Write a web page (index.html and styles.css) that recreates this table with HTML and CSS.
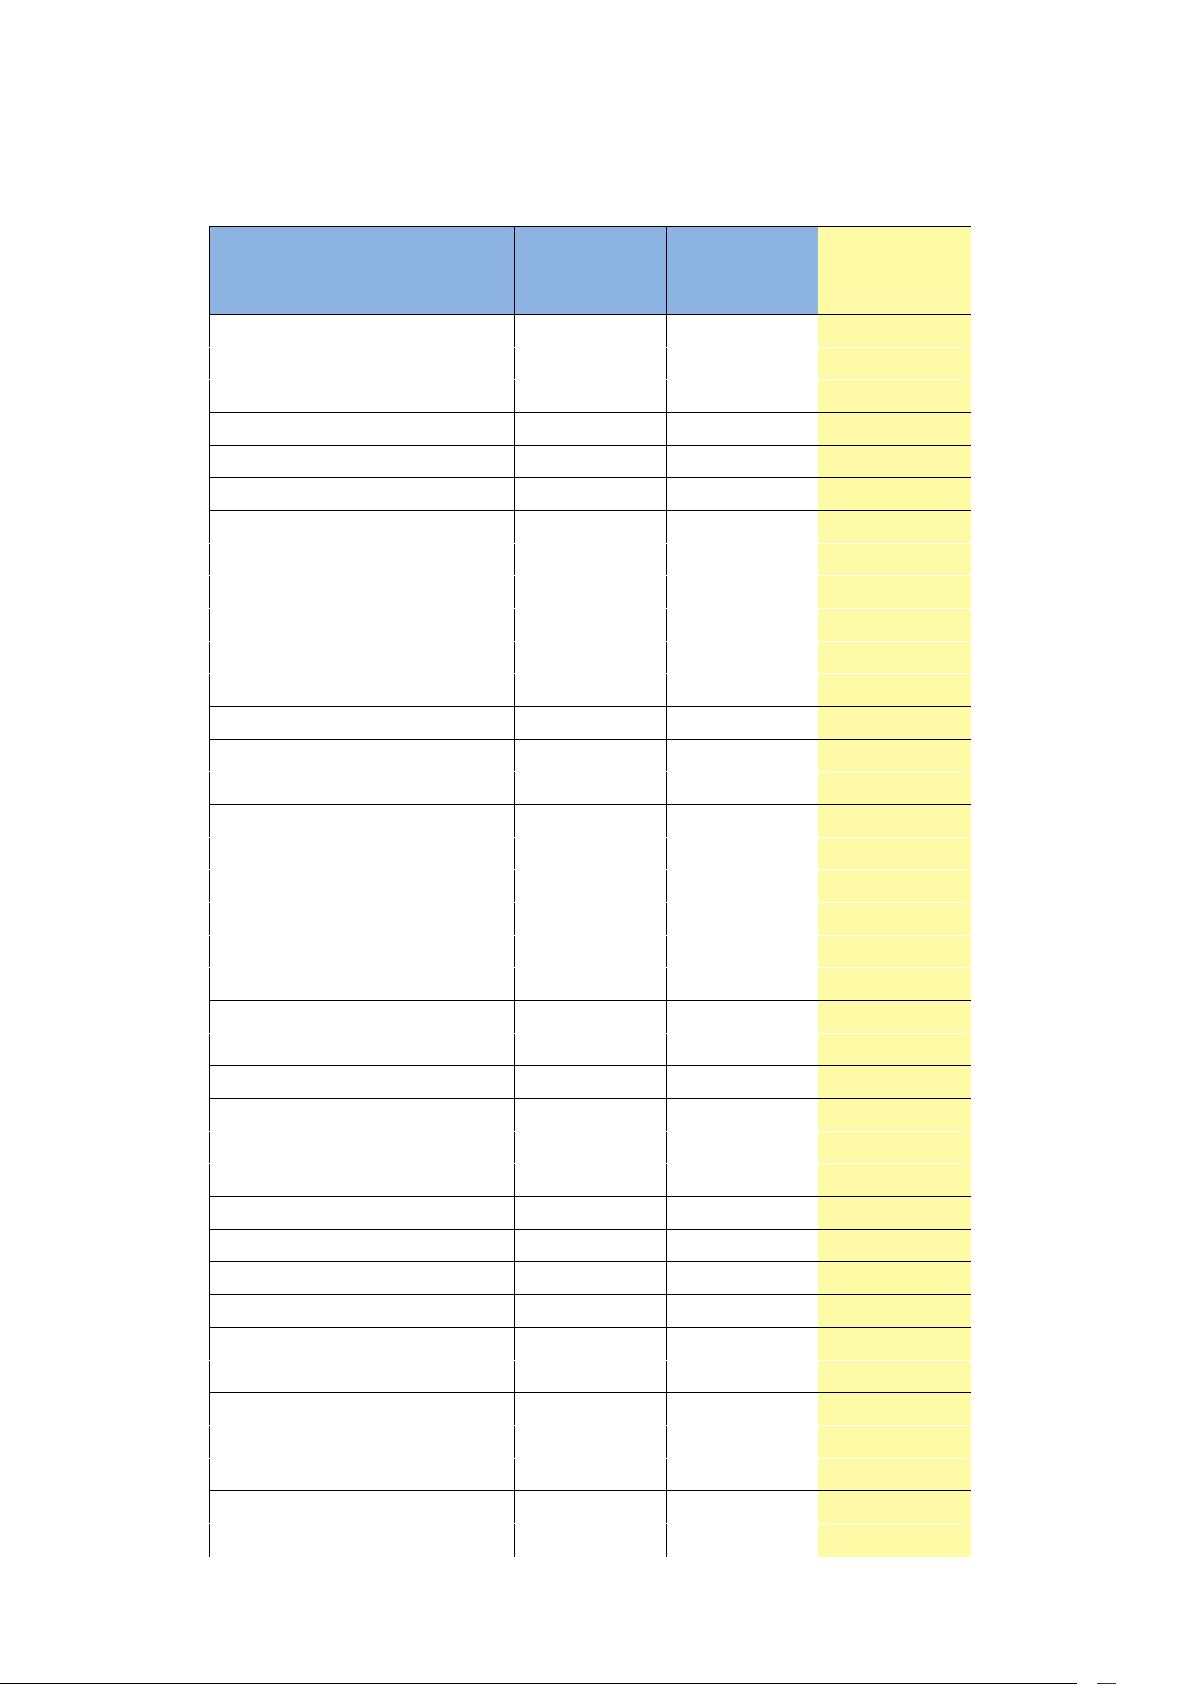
FILE: index.html
```html
<!DOCTYPE html>
<html lang="en">
<head>
<meta charset="utf-8">
<title>Sheet</title>
<link rel="stylesheet" href="styles.css">
</head>
<body>
<div class="sheet">
  <div class="table">
    <div class="head">
      <div class="c b"></div><div class="c b"></div><div class="c b"></div><div class="y"></div>
    </div>
    <!-- group 3 -->
    <div class="row"><div class="c"></div><div class="c"></div><div class="c"></div><div class="y"></div></div>
    <div class="row"><div class="c"></div><div class="c"></div><div class="c"></div><div class="y"></div></div>
    <div class="row end"><div class="c"></div><div class="c"></div><div class="c"></div><div class="y"></div></div>
    <!-- 1 -->
    <div class="row end"><div class="c"></div><div class="c"></div><div class="c"></div><div class="y"></div></div>
    <!-- 1 -->
    <div class="row end"><div class="c"></div><div class="c"></div><div class="c"></div><div class="y"></div></div>
    <!-- 1 -->
    <div class="row end"><div class="c"></div><div class="c"></div><div class="c"></div><div class="y"></div></div>
    <!-- 6 -->
    <div class="row"><div class="c"></div><div class="c"></div><div class="c"></div><div class="y"></div></div>
    <div class="row"><div class="c"></div><div class="c"></div><div class="c"></div><div class="y"></div></div>
    <div class="row"><div class="c"></div><div class="c"></div><div class="c"></div><div class="y"></div></div>
    <div class="row"><div class="c"></div><div class="c"></div><div class="c"></div><div class="y"></div></div>
    <div class="row"><div class="c"></div><div class="c"></div><div class="c"></div><div class="y"></div></div>
    <div class="row end"><div class="c"></div><div class="c"></div><div class="c"></div><div class="y"></div></div>
    <!-- 1 -->
    <div class="row end"><div class="c"></div><div class="c"></div><div class="c"></div><div class="y"></div></div>
    <!-- 2 -->
    <div class="row"><div class="c"></div><div class="c"></div><div class="c"></div><div class="y"></div></div>
    <div class="row end"><div class="c"></div><div class="c"></div><div class="c"></div><div class="y"></div></div>
    <!-- 6 -->
    <div class="row"><div class="c"></div><div class="c"></div><div class="c"></div><div class="y"></div></div>
    <div class="row"><div class="c"></div><div class="c"></div><div class="c"></div><div class="y"></div></div>
    <div class="row"><div class="c"></div><div class="c"></div><div class="c"></div><div class="y"></div></div>
    <div class="row"><div class="c"></div><div class="c"></div><div class="c"></div><div class="y"></div></div>
    <div class="row"><div class="c"></div><div class="c"></div><div class="c"></div><div class="y"></div></div>
    <div class="row end"><div class="c"></div><div class="c"></div><div class="c"></div><div class="y"></div></div>
    <!-- 2 -->
    <div class="row"><div class="c"></div><div class="c"></div><div class="c"></div><div class="y"></div></div>
    <div class="row end"><div class="c"></div><div class="c"></div><div class="c"></div><div class="y"></div></div>
    <!-- 1 -->
    <div class="row end"><div class="c"></div><div class="c"></div><div class="c"></div><div class="y"></div></div>
    <!-- 3 -->
    <div class="row"><div class="c"></div><div class="c"></div><div class="c"></div><div class="y"></div></div>
    <div class="row"><div class="c"></div><div class="c"></div><div class="c"></div><div class="y"></div></div>
    <div class="row end"><div class="c"></div><div class="c"></div><div class="c"></div><div class="y"></div></div>
    <!-- 1 x4 -->
    <div class="row end"><div class="c"></div><div class="c"></div><div class="c"></div><div class="y"></div></div>
    <div class="row end"><div class="c"></div><div class="c"></div><div class="c"></div><div class="y"></div></div>
    <div class="row end"><div class="c"></div><div class="c"></div><div class="c"></div><div class="y"></div></div>
    <div class="row end"><div class="c"></div><div class="c"></div><div class="c"></div><div class="y"></div></div>
    <!-- 2 -->
    <div class="row"><div class="c"></div><div class="c"></div><div class="c"></div><div class="y"></div></div>
    <div class="row end"><div class="c"></div><div class="c"></div><div class="c"></div><div class="y"></div></div>
    <!-- 3 -->
    <div class="row"><div class="c"></div><div class="c"></div><div class="c"></div><div class="y"></div></div>
    <div class="row"><div class="c"></div><div class="c"></div><div class="c"></div><div class="y"></div></div>
    <div class="row end"><div class="c"></div><div class="c"></div><div class="c"></div><div class="y"></div></div>
    <!-- 2 (open bottom) -->
    <div class="row"><div class="c"></div><div class="c"></div><div class="c"></div><div class="y"></div></div>
    <div class="row last"><div class="c"></div><div class="c"></div><div class="c"></div><div class="y"></div></div>
  </div>
</div>
<div class="footer">
  <div class="rule"></div>
  <div class="mark"></div>
</div>
</body>
</html>
```
FILE: styles.css
```css
* {
  box-sizing: border-box;
}

html,
body {
  margin: 0;
  background: #ffffff;
}

body {
  width: 1192px;
  height: 1685px;
  overflow: hidden;
  font-family: "Liberation Sans", Arial, sans-serif;
}

.sheet {
  padding-top: 226px;
  padding-left: 209px;
}

.table {
  width: 762px;
}

.head,
.row {
  display: grid;
  grid-template-columns: 305px 152px 152px 153px;
}

.head {
  height: 89px;
  border-top: 1px solid #000;
  border-bottom: 1px solid #000;
}

.row {
  height: 32.68px;
  border-bottom: 1.3px solid #ffffff;
}

.row.end {
  border-bottom: 1px solid #000;
}

.row.last {
  border-bottom: 0;
}

.c {
  border-left: 1px solid #000;
}

.b {
  background: #8db3e2;
}

.y {
  background: #fffaa5;
}

.footer {
  display: flex;
  height: 1px;
  margin-top: 126px;
}

.rule {
  width: 1077px;
  background: #000;
}

.mark {
  width: 19px;
  margin-left: 20px;
  background: #333;
}
```
